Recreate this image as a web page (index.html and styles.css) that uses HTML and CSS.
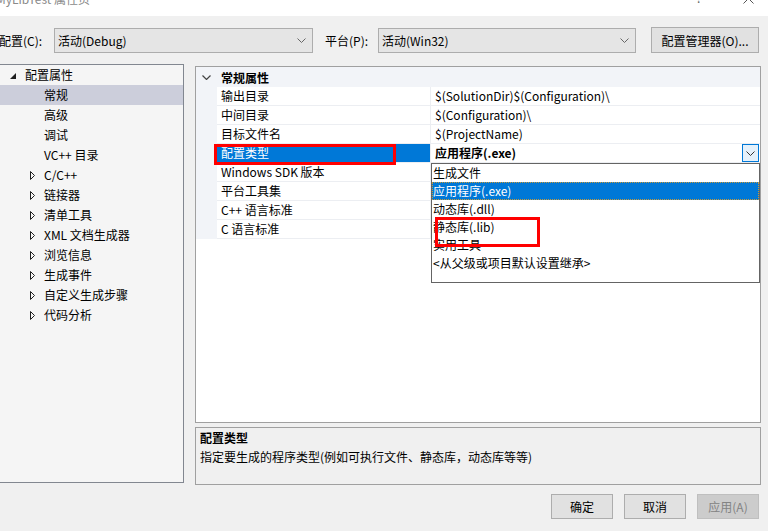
FILE: index.html
```html
<!DOCTYPE html>
<html>
<head lang="zh">
    <meta charset="UTF-8">
    <title>MyLibTest 属性页</title>
    <link rel="stylesheet" href="styles.css">
</head>
<body>
<div id="window">
    <div class="titlebar">
        <span class="title">MyLibTest 属性页</span>
        <span class="help">?</span>
        <svg class="close" width="11" height="11"><path d="M0.5,0.5 L10.5,10.5 M10.5,0.5 L0.5,10.5" stroke="#555" fill="none"/></svg>
    </div>

    <div class="toolbar">
        <span class="lbl lbl-config">配置(C):</span>
        <div class="combo combo-config">
            <span>活动(Debug)</span>
            <svg width="9" height="5"><polyline points="0.5,0.5 4.5,4.5 8.5,0.5" fill="none" stroke="#666"/></svg>
        </div>
        <span class="lbl lbl-plat">平台(P):</span>
        <div class="combo combo-plat">
            <span>活动(Win32)</span>
            <svg width="9" height="5"><polyline points="0.5,0.5 4.5,4.5 8.5,0.5" fill="none" stroke="#666"/></svg>
        </div>
        <button class="btn btn-mgr">配置管理器(O)...</button>
    </div>

    <div class="main">
        <!-- 左侧树 -->
        <ul class="tree">
            <li class="node root"><span class="icon"><svg width="6" height="6"><polygon points="6,0 6,6 0,6" fill="#1e1e1e"/></svg></span>配置属性</li>
            <li class="node child sel"><span class="icon"></span>常规</li>
            <li class="node child"><span class="icon"></span>高级</li>
            <li class="node child"><span class="icon"></span>调试</li>
            <li class="node child"><span class="icon"></span>VC++ 目录</li>
            <li class="node child"><span class="icon"><svg width="5" height="9"><polygon points="0.5,0.5 4.5,4.5 0.5,8.5" fill="none" stroke="#1e1e1e"/></svg></span>C/C++</li>
            <li class="node child"><span class="icon"><svg width="5" height="9"><polygon points="0.5,0.5 4.5,4.5 0.5,8.5" fill="none" stroke="#1e1e1e"/></svg></span>链接器</li>
            <li class="node child"><span class="icon"><svg width="5" height="9"><polygon points="0.5,0.5 4.5,4.5 0.5,8.5" fill="none" stroke="#1e1e1e"/></svg></span>清单工具</li>
            <li class="node child"><span class="icon"><svg width="5" height="9"><polygon points="0.5,0.5 4.5,4.5 0.5,8.5" fill="none" stroke="#1e1e1e"/></svg></span>XML 文档生成器</li>
            <li class="node child"><span class="icon"><svg width="5" height="9"><polygon points="0.5,0.5 4.5,4.5 0.5,8.5" fill="none" stroke="#1e1e1e"/></svg></span>浏览信息</li>
            <li class="node child"><span class="icon"><svg width="5" height="9"><polygon points="0.5,0.5 4.5,4.5 0.5,8.5" fill="none" stroke="#1e1e1e"/></svg></span>生成事件</li>
            <li class="node child"><span class="icon"><svg width="5" height="9"><polygon points="0.5,0.5 4.5,4.5 0.5,8.5" fill="none" stroke="#1e1e1e"/></svg></span>自定义生成步骤</li>
            <li class="node child"><span class="icon"><svg width="5" height="9"><polygon points="0.5,0.5 4.5,4.5 0.5,8.5" fill="none" stroke="#1e1e1e"/></svg></span>代码分析</li>
        </ul>

        <div class="right">
            <!-- 属性表 -->
            <div class="grid">
                <div class="cat">
                    <span class="cat-toggle"><svg width="9" height="5"><polyline points="0.5,0.5 4.5,4.5 8.5,0.5" fill="none" stroke="#444" stroke-width="1.2"/></svg></span>常规属性
                </div>
                <div class="row"><div class="gutter"></div><div class="name">输出目录</div><div class="value">$(SolutionDir)$(Configuration)\</div></div>
                <div class="row"><div class="gutter"></div><div class="name">中间目录</div><div class="value">$(Configuration)\</div></div>
                <div class="row"><div class="gutter"></div><div class="name">目标文件名</div><div class="value">$(ProjectName)</div></div>
                <div class="row active"><div class="gutter"></div><div class="name">配置类型</div>
                    <div class="value"><b>应用程序(.exe)</b>
                        <span class="drop-btn"><svg width="9" height="5"><polyline points="0.5,0.5 4.5,4.5 8.5,0.5" fill="none" stroke="#333"/></svg></span>
                    </div>
                </div>
                <div class="row"><div class="gutter"></div><div class="name">Windows SDK 版本</div><div class="value"></div></div>
                <div class="row"><div class="gutter"></div><div class="name">平台工具集</div><div class="value"></div></div>
                <div class="row"><div class="gutter"></div><div class="name">C++ 语言标准</div><div class="value"></div></div>
                <div class="row"><div class="gutter"></div><div class="name">C 语言标准</div><div class="value"></div></div>

                <ul class="drop-list">
                    <li>生成文件</li>
                    <li class="hl">应用程序(.exe)</li>
                    <li>动态库(.dll)</li>
                    <li>静态库(.lib)</li>
                    <li>实用工具</li>
                    <li>&lt;从父级或项目默认设置继承&gt;</li>
                </ul>

                <div class="mark mark-type"></div>
                <div class="mark mark-lib"></div>
            </div>

            <div class="desc">
                <div class="desc-title">配置类型</div>
                <div>指定要生成的程序类型(例如可执行文件、静态库，动态库等等)</div>
            </div>

            <div class="buttons">
                <button class="btn">确定</button>
                <button class="btn">取消</button>
                <button class="btn disabled">应用(A)</button>
            </div>
        </div>
    </div>
</div>
</body>
</html>
```

FILE: styles.css
```css
*{
    padding:0;
    margin:0;
    box-sizing:border-box;
}
body{
    background:#f0f0f0;
    font-family:"Noto Sans CJK SC", sans-serif;
    font-size:12px;
    color:#000;
    overflow:hidden;
}
#window{
    width:768px;
    height:531px;
    overflow:hidden;
}

/* 标题栏 */
.titlebar{
    height:16px;
    background:#fff;
    display:flex;
    align-items:flex-start;
    overflow:hidden;
    line-height:16px;
}
.title{
    flex:1;
    margin:-9px 0 0 -4px;
    color:#8a8a8a;
}
.help{
    width:10px;
    margin:-10px 37px 0 0;
    color:#666;
}
.close{
    margin:-7px 14px 0 0;
}

/* 配置 / 平台 */
.toolbar{
    height:48px;
    padding-top:12px;
    display:flex;
    align-items:flex-start;
}
.lbl{
    line-height:25px;
}
.lbl-config{
    width:55px;
    margin-left:-1px;
}
.lbl-plat{
    width:53px;
    margin-left:12px;
}
.combo{
    height:25px;
    border:1px solid #adadad;
    background:#e5e5e5;
    display:flex;
    align-items:center;
    justify-content:space-between;
    padding:0 6px 0 3px;
}
.combo-config{ width:259px; }
.combo-plat{ width:258px; }

.btn{
    width:62px;
    height:25px;
    border:1px solid #adadad;
    background:#e1e1e1;
    font-family:inherit;
    font-size:12px;
    color:#000;
}
.btn-mgr{
    width:108px;
    height:26px;
    margin:-1px 0 0 15px;
}
.btn.disabled{
    background:#cccccc;
    border-color:#bfbfbf;
    color:#838383;
}

.main{
    display:flex;
    align-items:flex-start;
}

/* 树 */
.tree{
    width:185px;
    height:419px;
    margin-left:-1px;
    border:1px solid #828790;
    background:#f5f5f5;
    list-style:none;
}
.node{
    height:20px;
    line-height:20px;
    display:flex;
    align-items:center;
}
.node .icon{
    display:flex;
    align-items:center;
}
.root{ padding-left:10px; }
.root .icon{ width:15px; margin-top:2px; }
.child{ padding-left:30px; }
.child .icon{ width:14px; }
.sel{ background:#cccedb; }

.right{
    width:566px;
    margin:2px 0 0 11px;
}

/* 属性表 */
.grid{
    position:relative;
    height:357px;
    border:1px solid #a0a0a0;
    background:#fff;
}
.cat{
    height:20px;
    background:#f2f4f8;
    font-weight:bold;
    display:flex;
    align-items:center;
}
.cat-toggle{
    width:25px;
    padding-left:6px;
    display:flex;
    align-items:center;
}
.row{
    display:flex;
    height:19px;
}
.gutter{
    width:21px;
    background:#f2f4f8;
}
.name{
    width:214px;
    padding-left:4px;
    line-height:18px;
    border-right:1px solid #eceef2;
    border-bottom:1px solid #eceef2;
    white-space:nowrap;
}
.value{
    flex:1;
    padding-left:4px;
    line-height:18px;
    border-bottom:1px solid #eceef2;
    display:flex;
    align-items:center;
}
.active .name{
    background:#0078d7;
    color:#fff;
}
.drop-btn{
    margin-left:auto;
    margin-right:1px;
    width:17px;
    height:18px;
    border:1px solid #0078d7;
    background:#e5f1fb;
    display:flex;
    align-items:center;
    justify-content:center;
}

.drop-list{
    position:absolute;
    left:235px;
    top:96px;
    width:329px;
    height:120px;
    border:1px solid #646464;
    background:#fff;
    list-style:none;
}
.drop-list li{
    height:18px;
    line-height:18px;
    padding-left:1px;
    white-space:nowrap;
}
.drop-list .hl{
    background:#0078d7;
    color:#fff;
    outline:1px dotted #c89a3a;
    outline-offset:-1px;
}

.mark{
    position:absolute;
    border:3px solid #ff0000;
}
.mark-type{
    left:18px;
    top:77px;
    width:182px;
    height:21px;
}
.mark-lib{
    left:239px;
    top:150px;
    width:105px;
    height:30px;
}

/* 说明 */
.desc{
    margin-top:4px;
    height:58px;
    border:1px solid #a0a0a0;
    background:#f0f0f0;
    padding-left:4px;
    line-height:19px;
}
.desc-title{
    font-weight:bold;
}

.buttons{
    margin-top:9px;
    display:flex;
    justify-content:flex-end;
    gap:11px;
    padding-right:2px;
}
```
